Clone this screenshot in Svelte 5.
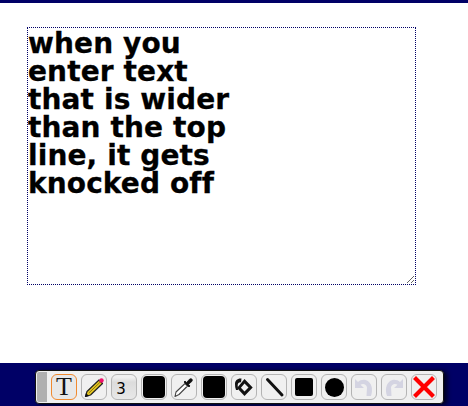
<script>
  const text = 'when you\nenter text\nthat is wider\nthan the top\nline, it gets\nknocked off';
</script>

<div class="page">
  <div class="top-bar"></div>
  <div class="canvas">
    <textarea class="text-input" value={text}></textarea>
  </div>
  <div class="dock">
    <div class="toolbar">
      <div class="grip"></div>
      <button class="tool active"><span class="t-glyph">T</span></button>
      <button class="tool">
        <svg width="24" height="24" viewBox="0 0 24 24">
          <path d="M3.5 21.5 L5 16.5 L17 5 L20.5 8.5 L8.5 20 Z" fill="#e8c81e" stroke="#222" stroke-width="1.2" stroke-linejoin="round"/>
          <path d="M6.8 18 L18.5 6.8" stroke="#6b5a10" stroke-width="0.8"/>
          <path d="M3 22 L4 18 L7 21 Z" fill="#111"/>
          <circle cx="19.5" cy="5.5" r="2.2" fill="#f0106a"/>
        </svg>
      </button>
      <button class="tool size"><span class="size-num">3</span></button>
      <button class="tool"><span class="swatch"></span></button>
      <button class="tool">
        <svg width="24" height="24" viewBox="0 0 24 24">
          <path d="M3 21.5 L4 17 L13 8.5 L15.5 11 L7 19.5 Z" fill="#fff" stroke="#444" stroke-width="1.1" stroke-linejoin="round"/>
          <path d="M12 7 L17 12 L18 11 L16.5 9.3 L19.8 6.5 C21.3 4.6 19.4 2.8 17.5 4.2 L14.6 7.5 L13 6 Z" fill="#111" stroke="#111" stroke-width="0.8"/>
        </svg>
      </button>
      <button class="tool"><span class="swatch"></span></button>
      <button class="tool">
        <svg width="24" height="24" viewBox="0 0 24 24">
          <path fill-rule="evenodd" d="M12.5 4 L20.7 12.5 L12.5 21 L5 13 Z M12.5 8.5 L8.9 12.8 L12.5 16.6 L16.5 12.5 Z" fill="#111"/>
          <path d="M9.5 3.5 C5.5 3 3 5.5 3 9 C3 11 3.2 13 4 15 L6 15 L5.7 10 C5.7 8.2 7 7 9 7.2 Z" fill="#111"/>
        </svg>
      </button>
      <button class="tool">
        <svg width="24" height="24" viewBox="0 0 24 24">
          <path d="M5.5 4.5 L20 20" stroke="#111" stroke-width="3" stroke-linecap="round"/>
        </svg>
      </button>
      <button class="tool"><span class="square"></span></button>
      <button class="tool"><span class="dot"></span></button>
      <button class="tool">
        <svg width="24" height="24" viewBox="0 0 24 24">
          <path d="M3 4 L3 13 L12 13 L8.5 9.7 C11 8 14.5 9 15 12.5 L14.5 21 L19 21 C21 15 20 9.5 16.7 6.7 C13.5 4 9 4.2 6 7 Z" fill="#d4d4e2"/>
        </svg>
      </button>
      <button class="tool">
        <svg width="24" height="24" viewBox="0 0 24 24">
          <path d="M21 4 L21 13 L12 13 L15.5 9.7 C13 8 9.5 9 9 12.5 L9.5 21 L5 21 C3 15 4 9.5 7.3 6.7 C10.5 4 15 4.2 18 7 Z" fill="#d4d4e2"/>
        </svg>
      </button>
      <button class="tool">
        <svg width="24" height="24" viewBox="0 0 24 24">
          <path d="M4 4 L20 20 M20 4 L4 20" stroke="#f00" stroke-width="4.2" stroke-linecap="square"/>
        </svg>
      </button>
    </div>
  </div>
</div>

<style>
  :global(body) { margin: 0; background: #fff; }

  .page {
    width: 468px; height: 406px;
    display: flex; flex-direction: column;
    overflow: hidden;
  }
  .top-bar { height: 3px; background: #000066; flex-shrink: 0; }

  .canvas { flex: 1; padding: 24px 0 0 27px; }

  .text-input {
    display: block;
    width: 389px; height: 258px;
    box-sizing: border-box;
    margin: 0; padding: 2px 0 0 0;
    border: 1px dotted #000066;
    outline: none;
    resize: both;
    overflow: hidden;
    background: #fff; color: #000;
    font-family: "DejaVu Sans", Verdana, sans-serif;
    font-weight: bold;
    font-size: 28px;
    line-height: 28px;
    letter-spacing: 0.12px;
    -webkit-text-stroke: 0.3px #000;
  }

  .dock {
    height: 43px; flex-shrink: 0;
    background: #000066;
    padding: 7px 0 0 35px;
    box-sizing: border-box;
  }

  .toolbar {
    width: 409px; height: 34px;
    box-sizing: border-box;
    display: flex; align-items: center; gap: 4px;
    padding: 0 6px 0 1px;
    background: #f0f0f0;
    border: 1px solid #111;
    border-radius: 4px;
    box-shadow: 3px 1px 5px rgba(0,0,0,0.75);
  }

  .grip { width: 10px; height: 30px; background: #b0b0b0; border-radius: 2px 0 0 2px; }

  .tool {
    width: 26px; height: 26px;
    box-sizing: border-box;
    padding: 0;
    display: flex; align-items: center; justify-content: center;
    background: #f0f0f0;
    border: 1px solid #b4b4b4;
    border-radius: 6px;
    flex-shrink: 0;
  }
  .tool.active { border-color: #f08a30; background: #e8e8e8; }
  .tool.size { background: linear-gradient(#f0f0f0 10%, #dcdcdc 30%, #e8e8e8); }

  .t-glyph {
    font-family: "Liberation Serif", serif;
    font-size: 26px; line-height: 24px; color: #111;
  }
  .size-num {
    font-family: "DejaVu Sans", sans-serif;
    font-size: 15px; color: #000;
    margin: 4px 6px 0 0;
  }
  .swatch { width: 22px; height: 22px; background: #000; border-radius: 4px; }
  .square { width: 18px; height: 18px; background: #000; border-radius: 2px; }
  .dot { width: 19px; height: 19px; background: #000; border-radius: 50%; }
</style>
